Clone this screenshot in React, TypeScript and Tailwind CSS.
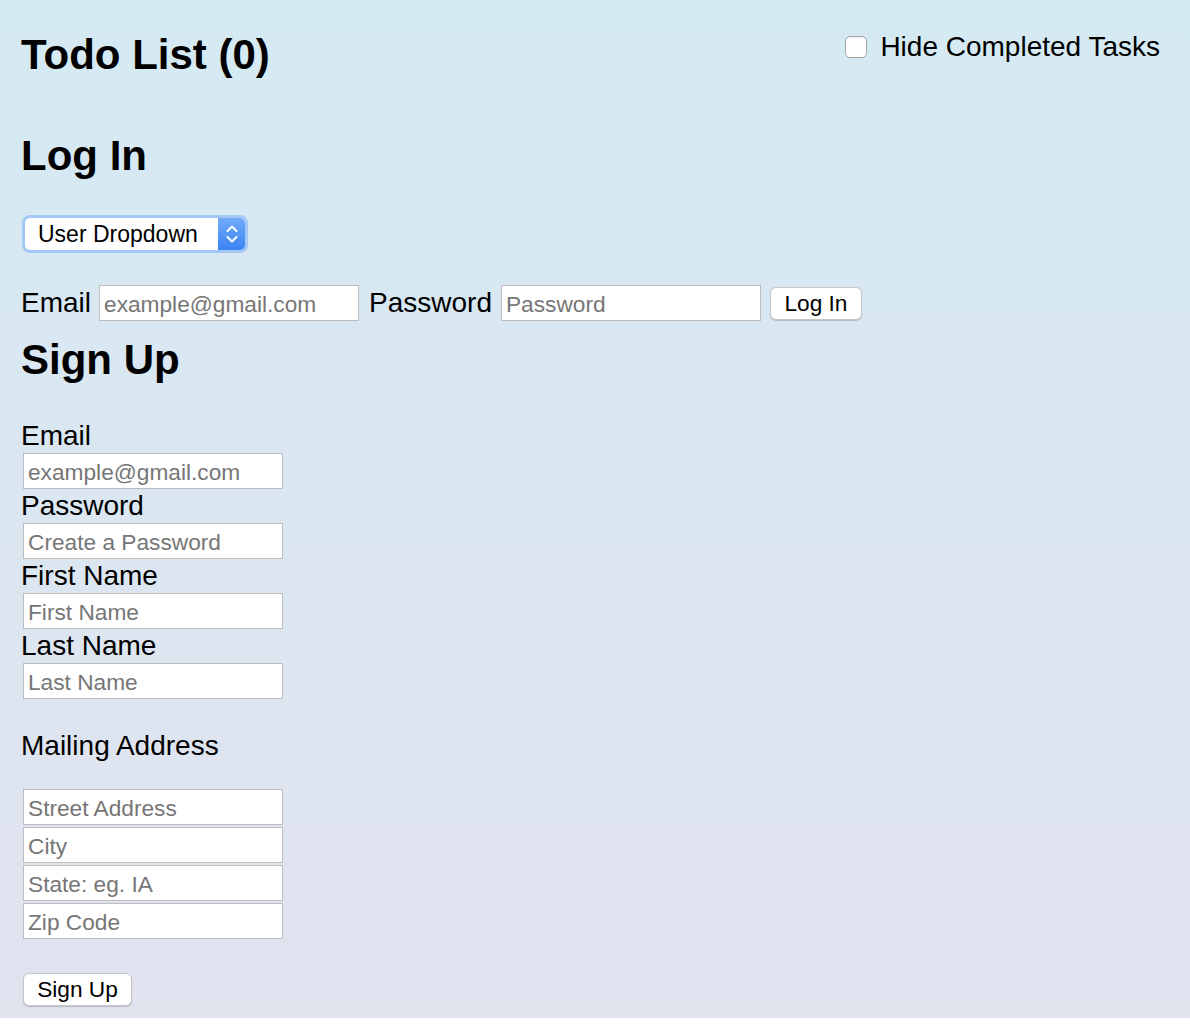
import React from "react";

function TextInput({ placeholder, className = "" }: { placeholder: string; className?: string }) {
  return (
    <input
      type="text"
      placeholder={placeholder}
      className={
        "block w-[260px] h-[36px] border border-[#bdbdbd] bg-white pl-[4px] pr-[4px] pt-[2px] text-[22.7px] text-black placeholder:text-[#767676] outline-none font-['Liberation_Sans',Arial,sans-serif] " +
        className
      }
    />
  );
}

function Button({ children, className = "" }: { children: React.ReactNode; className?: string }) {
  return (
    <button
      type="button"
      className={
        "h-[33px] rounded-[6px] border border-[#c6c6c6] bg-white text-[22.7px] leading-none text-black shadow-[0_1px_1px_rgba(0,0,0,0.18)] font-['Liberation_Sans',Arial,sans-serif] " +
        className
      }
    >
      {children}
    </button>
  );
}

export default function App() {
  return (
    <div className="bg-linear-to-b from-[#d4eaf3] to-[#e1e3ef] pl-[21px] pr-[30px] pt-[30px] pb-[12px] font-['Liberation_Sans',Arial,sans-serif] text-black">
      <div className="flex items-start justify-between">
        <h1 className="mt-[1px] text-[42px] leading-[48px] font-bold">Todo List (0)</h1>
        <label className="flex items-center h-[34px]">
          <span className="block w-[22px] h-[22px] rounded-[5px] border border-[#a3a3a3] bg-white shadow-[inset_0_1px_1px_rgba(0,0,0,0.06)]" />
          <span className="ml-[13px] text-[28px] leading-[34px]">Hide Completed Tasks</span>
        </label>
      </div>

      <h2 className="mt-[53px] text-[42px] leading-[48px] font-bold">Log In</h2>

      <div className="mt-[35px] ml-[1px] w-[226px] h-[38px] rounded-[8px] bg-[#a3c8f5] p-[3px]">
        <div className="flex h-[32px] w-full overflow-hidden rounded-[5px] bg-white">
          <div className="flex-1 pl-[13px] text-[23px] leading-[32px]">User Dropdown</div>
          <div className="flex w-[27px] items-center justify-center bg-linear-to-b from-[#72abf8] to-[#3a84f5]">
            <svg width="14" height="22" viewBox="0 0 14 22" fill="none" stroke="white" strokeWidth="2" strokeLinecap="round" strokeLinejoin="round">
              <path d="M2.5 8 L7 3.5 L11.5 8" />
              <path d="M2.5 14 L7 18.5 L11.5 14" />
            </svg>
          </div>
        </div>
      </div>

      <div className="mt-[32px] flex h-[36px] items-center">
        <span className="text-[28px] leading-[34px]">Email</span>
        <TextInput placeholder="example@gmail.com" className="ml-[8px]" />
        <span className="ml-[10px] text-[28px] leading-[34px]">Password</span>
        <TextInput placeholder="Password" className="ml-[9px]" />
        <Button className="ml-[9px] w-[92px]">Log In</Button>
      </div>

      <h2 className="mt-[15px] text-[42px] leading-[48px] font-bold">Sign Up</h2>

      <div className="mt-[35px]">
        <div className="text-[28px] leading-[34px]">Email</div>
        <TextInput placeholder="example@gmail.com" className="ml-[2px]" />
        <div className="text-[28px] leading-[34px]">Password</div>
        <TextInput placeholder="Create a Password" className="ml-[2px]" />
        <div className="text-[28px] leading-[34px]">First Name</div>
        <TextInput placeholder="First Name" className="ml-[2px]" />
        <div className="text-[28px] leading-[34px]">Last Name</div>
        <TextInput placeholder="Last Name" className="ml-[2px]" />

        <div className="mt-[30px] text-[28px] leading-[34px]">Mailing Address</div>

        <div className="mt-[26px] flex flex-col gap-[2px]">
          <TextInput placeholder="Street Address" className="ml-[2px]" />
          <TextInput placeholder="City" className="ml-[2px]" />
          <TextInput placeholder="State: eg. IA" className="ml-[2px]" />
          <TextInput placeholder="Zip Code" className="ml-[2px]" />
        </div>

        <Button className="mt-[34px] ml-[2px] w-[109px] block">Sign Up</Button>
      </div>
    </div>
  );
}
